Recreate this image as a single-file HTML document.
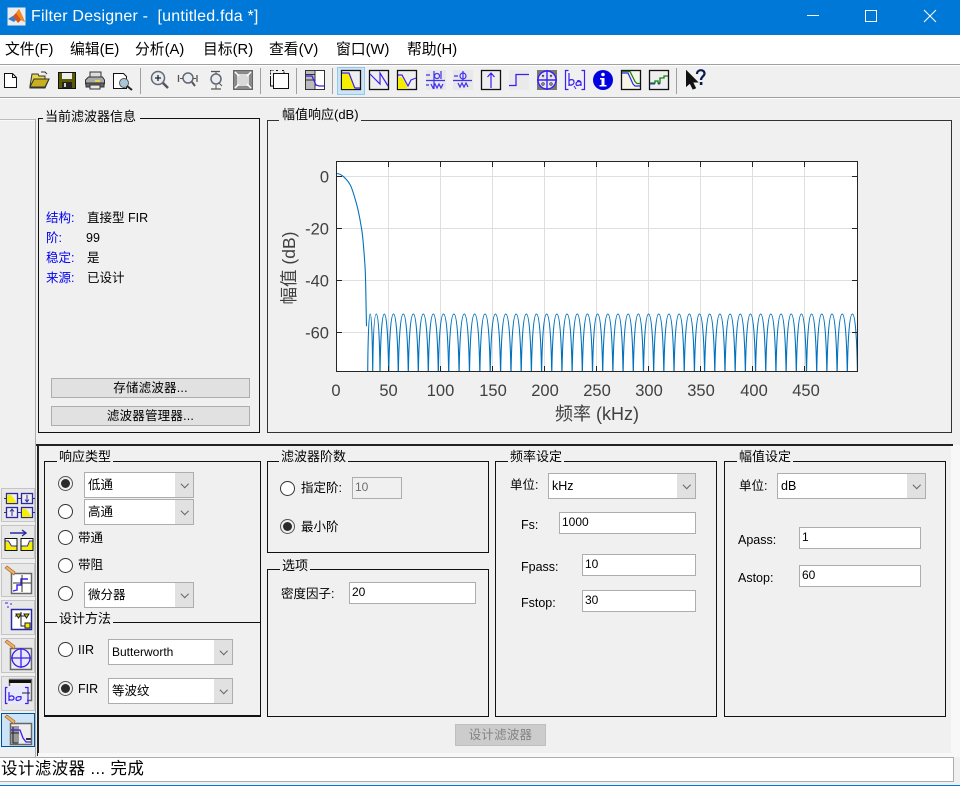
<!DOCTYPE html>
<html lang="zh"><head><meta charset="utf-8"><title>Filter Designer</title>
<style>
html,body{margin:0;padding:0}
body{width:960px;height:786px;position:relative;overflow:hidden;background:#f0f0f0;font-family:"Liberation Sans","Noto Sans CJK SC",sans-serif;font-size:12.5px;color:#000}
div,span,svg{position:absolute;box-sizing:border-box}
.t{white-space:nowrap;height:20px;line-height:20px}
.b{color:#0000f0}
.p{border:1px solid #111}
.l{height:14px;line-height:14px;background:#f0f0f0;white-space:nowrap;padding:0 2px;font-size:13px}
.s,.i{background:#fff;border:1px solid #adadad;white-space:nowrap;padding-left:3px}
.s{height:26px;line-height:24px;font-size:12.5px}
.i{height:22px;line-height:18px;font-size:12px}
.s i{position:absolute;right:0;top:0;bottom:0;width:18px;background:#e1e1e1}
.s i:after{content:"";position:absolute;left:6.500px;top:8px;width:4.500px;height:4.500px;border-right:1px solid #666;border-bottom:1px solid #666;transform:rotate(45deg)}
.r{width:15px;height:15px;border-radius:50%;background:#fff;border:1px solid #333}
.r.on{border-color:#555;background:#f0f0f0}
.r.on:after{content:"";position:absolute;left:2px;top:2px;width:9px;height:9px;border-radius:50%;background:#2b2b2b}
.btn{background:#e1e1e1;border:1px solid #adadad;text-align:center;font-size:12.5px;letter-spacing:.2px}
.m{top:40px;height:20px;line-height:20px;font-size:14.800px;white-space:nowrap}
</style></head><body>

<!-- title bar -->
<div style="left:0;top:0;width:960px;height:35px;background:#0078d7"></div>
<svg style="left:7px;top:7px" width="19" height="19" viewBox="0 0 19 19"><rect x="0.5" y="0.5" width="18" height="18" fill="#e9edf2"/><path d="M1 12l5-3 3-3 3-4 3 6 3 7-4-2-3 3-3-4z" fill="#d9531e"/><path d="M1 12l5-3 3 4-2 2z" fill="#3f7fbf"/><path d="M9 6l3-4 3 6 3 7-4-2z" fill="#f08c1a"/></svg>
<div class="t" style="left:31px;top:7px;color:#fff;font-size:16px;letter-spacing:.2px">Filter Designer -&nbsp; [untitled.fda *]</div>
<svg style="left:800px;top:5px" width="145" height="24"><path d="M7 10.5h12" stroke="#fff"/><rect x="65.5" y="5.5" width="11" height="11" fill="none" stroke="#fff"/><path d="M124 5l12 12M136 5l-12 12" stroke="#fff"/></svg>

<!-- menu -->
<div style="left:0;top:35px;width:960px;height:29px;background:#fff"></div>
<div class="m" style="left:5px">文件(F)</div>
<div class="m" style="left:70px">编辑(E)</div>
<div class="m" style="left:135px">分析(A)</div>
<div class="m" style="left:203px">目标(R)</div>
<div class="m" style="left:269px">查看(V)</div>
<div class="m" style="left:336px">窗口(W)</div>
<div class="m" style="left:407px">帮助(H)</div>
<div style="left:0;top:64px;width:960px;height:1px;background:#a0a0a0"></div>
<div style="left:0;top:65px;width:960px;height:1px;background:#fff"></div>
<div style="left:0;top:97px;width:960px;height:1px;background:#a0a0a0"></div>
<div style="left:0;top:98px;width:960px;height:1px;background:#fff"></div>

<!-- toolbar -->
<svg style="left:0;top:64px" width="720" height="34" viewBox="0 64 720 34">
<g fill="none" stroke="#a0a0a0"><path d="M140.5 68v26M260.5 68v26M296.5 68v26M332.5 68v26M676.5 68v26"/></g>
<rect x="337.5" y="67.5" width="27" height="27" fill="#cce4f7" stroke="#90c8f0"/>
<!-- new -->
<path d="M4.5 73.5h8l4 4v10h-12z" fill="#fff" stroke="#111"/><path d="M12.5 73.5v4h4" fill="none" stroke="#111"/>
<!-- open -->
<path d="M30 86l2-12h6l1 2h6v3h4l-4 9H30z" fill="#e8d44d" stroke="#333"/><path d="M30 87l4-8h15l-4 8z" fill="#c8b020" stroke="#333"/><path d="M41 72h4l2 2" fill="none" stroke="#333"/>
<!-- save -->
<rect x="58.5" y="72.5" width="17" height="16" fill="#5a5a00" stroke="#111"/><rect x="62" y="73" width="10" height="6" fill="#eee"/><rect x="62" y="82" width="10" height="6" fill="#222"/><rect x="64" y="83" width="2" height="4" fill="#ccc"/>
<!-- print -->
<rect x="90" y="72" width="11" height="6" fill="#ddd" stroke="#333"/><path d="M85.500 84v-4l3-3h14l2 3v4z" fill="#aaa" stroke="#333"/><rect x="86" y="83" width="18" height="4" fill="#666" stroke="#333"/><rect x="90" y="85" width="10" height="4" fill="#e8e8e8" stroke="#333"/><rect x="95" y="80" width="5" height="2" fill="#e8d44d"/>
<!-- preview -->
<path d="M113.500 73.500h10l3 3v12h-13z" fill="#fff" stroke="#111"/><circle cx="124" cy="83" r="4.500" fill="#a8c8d8" stroke="#555"/><path d="M127 86l5 4" stroke="#222" stroke-width="2"/>
<!-- zoom in -->
<circle cx="158" cy="78" r="6.500" fill="#e8eef0" stroke="#667"  stroke-width="1.500"/><path d="M155 78h6M158 75v6" stroke="#223" stroke-width="1.300"/><path d="M163 83l5 5" stroke="#555" stroke-width="2.500"/>
<!-- zoom x -->
<circle cx="188" cy="78" r="5" fill="#e8eef0" stroke="#667" stroke-width="1.500"/><path d="M192 82l3 4" stroke="#555" stroke-width="2"/><path d="M178.500 75v7M197 75v7" stroke="#555" stroke-width="1.300"/><path d="M180 78.500h3M193 78.500h3" stroke="#555"/>
<!-- zoom y -->
<circle cx="216" cy="79" r="5" fill="#e8eef0" stroke="#667" stroke-width="1.500"/><path d="M211 71.500h9M211 89h10" stroke="#555" stroke-width="1.300"/><path d="M216 72v2M216 85v4M219 83l3 3" stroke="#555"/>
<!-- fit -->
<rect x="233.500" y="70.500" width="19" height="19" fill="#8a8a8a" stroke="#666"/><rect x="237" y="74" width="12" height="12" fill="#d8d8d8"/><path d="M235 72l4 4M251 72l-4 4M235 88l4-4M251 88l-4-4" stroke="#fff" stroke-width="1.500"/>
<!-- copy -->
<path d="M270.500 74.500v-4h3M276 70.500h3M282 70.500h2v3" fill="none" stroke="#111" stroke-dasharray="2 1"/><rect x="273.500" y="73.500" width="15" height="15" fill="#fff" stroke="#111"/><path d="M270.500 76v10h3" fill="none" stroke="#111"/>
<!-- sidebar icon -->
<rect x="305.500" y="70.500" width="19" height="19" fill="#bbb" stroke="#333"/><rect x="315" y="71" width="9" height="18" fill="#fff"/><path d="M306 74.500h9M315 71v18M306 80h9" stroke="#333"/><path d="M306 76h6l4 9 3 1h5" fill="none" stroke="#3a20f0" stroke-width="1.300"/>
<!-- lowpass active -->
<rect x="341.500" y="70.500" width="19" height="19" fill="#eee" stroke="#111" stroke-width="1.300"/><path d="M342 73h7l6 16H342z" fill="#f5ee00"/><path d="M342 73h7l5 13 1 2h5" fill="none" stroke="#3a20f0" stroke-width="1.200"/>
<!-- highpass-like -->
<rect x="369.500" y="70.500" width="19" height="19" fill="#eee" stroke="#111" stroke-width="1.300"/><path d="M370 74l10 10v-11l8 13" fill="none" stroke="#3a20f0" stroke-width="1.200"/>
<!-- third -->
<rect x="397.500" y="70.500" width="19" height="19" fill="#eee" stroke="#111" stroke-width="1.300"/><path d="M398 77h4l5 9v3h-9z" fill="#f5ee00"/><path d="M398 75h4l6 11 3-6 5-2" fill="none" stroke="#3a20f0" stroke-width="1.200"/>
<!-- group delay -->
<rect x="426" y="70" width="20" height="20" fill="#e8e8e8"/>
<g fill="none" stroke="#4030f0" stroke-width="1.200"><path d="M426 80.500h19M426 75h4M426 85h3"/><path d="M434 71v18M441 71v8"/><circle cx="437" cy="76" r="2.500"/><path d="M431 84l2 4 2-4 2 4 2-4 2 4 2-4"/></g>
<!-- phase delay -->
<rect x="453" y="70" width="20" height="20" fill="#e8e8e8"/>
<g fill="none" stroke="#4030f0" stroke-width="1.200"><path d="M453 80.500h19M454 76h4"/><path d="M463 71v9"/><circle cx="463" cy="76" r="3"/><path d="M458 83l2 4 2-4 2 4 2-4 2 4"/></g>
<!-- impulse -->
<rect x="481.500" y="70.500" width="19" height="19" fill="#eee" stroke="#111" stroke-width="1.300"/><path d="M491 88V73M487.500 77l3.500-4 3.500 4" fill="none" stroke="#3a20f0" stroke-width="1.200"/>
<!-- step -->
<rect x="509" y="70" width="20" height="20" fill="#eaeaea"/><path d="M509 85.500h7v-11h13" fill="none" stroke="#3a20f0" stroke-width="1.300"/>
<!-- pole zero -->
<rect x="537" y="70" width="20" height="20" fill="#777"/><circle cx="547" cy="80" r="9" fill="#e8e8f8" stroke="#3a20f0" stroke-width="1.400"/><path d="M537 80h20M547 70v20" stroke="#3a20f0" stroke-width="1.400"/><path d="M542 75l2 2M544 75l-2 2M550 75l2 2M552 75l-2 2" stroke="#444"/><circle cx="543" cy="84" r="1.200" fill="none" stroke="#444"/><circle cx="551" cy="84" r="1.200" fill="none" stroke="#444"/>
<!-- coefficients -->
<path d="M568.500 70.500h-3v19h3M581.500 70.500h3v19h-3" fill="none" stroke="#3a20f0" stroke-width="1.200"/><path d="M569 73v13M569 81c1-2 5-2 5 1s-4 4-5 2M577 81c2-1 4 0 4 2v3M581 82c-3-1-5 0-5 2s3 2 5 0" fill="none" stroke="#3a20f0" stroke-width="1.200"/><path d="M574 86l2 3" stroke="#3a20f0"/>
<!-- info -->
<circle cx="603" cy="80" r="10" fill="#0000e0"/><circle cx="603" cy="74.500" r="1.800" fill="#fff"/><path d="M600 78h4.500v7h2v1.500h-7V85h2v-5.500h-1.500z" fill="#fff"/>
<!-- mag + phase -->
<rect x="621.500" y="70.500" width="19" height="19" fill="#f5f5e8" stroke="#111" stroke-width="1.300"/><path d="M622 73h6l5 11 2 2h5" fill="none" stroke="#3a20f0" stroke-width="1.200"/><path d="M622 71.500h8l5 10 2 2h3" fill="none" stroke="#108010" stroke-width="1.200"/>
<!-- round-off -->
<rect x="649.500" y="70.500" width="19" height="19" fill="#eee" stroke="#111" stroke-width="1.300"/><path d="M650 83h5v-2h3v2h2v-5h4v-2h4" fill="none" stroke="#108010" stroke-width="1.300"/><path d="M650 84h5M658 84h2" stroke="#3a20f0"/>
<!-- help -->
<path d="M686.500 71v15l3.500-3 3 6 2.500-1-3-6h5z" fill="#111" stroke="#111"/><path d="M697 74c0-5 7.500-5 7.500-.5 0 3-3.500 3-3.500 6.500" fill="none" stroke="#0a1a50" stroke-width="2.200"/><rect x="699.800" y="82" width="2.600" height="3" fill="#0a1a50"/>
</svg>

<!-- left strip -->
<div style="left:0;top:119px;width:36px;height:1px;background:#bdbdbd"></div>
<div style="left:0;top:120px;width:35px;height:1px;background:#fafafa"></div>
<div style="left:35px;top:119px;width:1px;height:638px;background:#adadad"></div>
<div style="left:37px;top:445px;width:1.500px;height:311px;background:#222"></div>
<svg style="left:0;top:486px" width="36" height="264" viewBox="0 486 36 264">
<g fill="#e8e8e8" stroke="#c4c4c4"><rect x="1.500" y="488.500" width="33" height="33"/><rect x="1.500" y="525.500" width="33" height="33"/><rect x="1.500" y="563.500" width="33" height="33"/><rect x="1.500" y="600.500" width="33" height="34"/><rect x="1.500" y="638.500" width="33" height="34"/><rect x="1.500" y="676.500" width="33" height="34"/></g>
<rect x="1.500" y="713.500" width="33" height="33" fill="#cce4f7" stroke="#005499"/>
<!-- 1 -->
<g fill="#eee" stroke="#2a2aa0" stroke-width="1.300"><rect x="6.500" y="493.500" width="11" height="10"/><rect x="21.500" y="493.500" width="11" height="10"/><rect x="6.500" y="507.500" width="11" height="10"/><rect x="21.500" y="507.500" width="11" height="10"/></g>
<path d="M7 495h4l6 8H7zM22 509h4l6 8H22z" fill="#f5ee00"/><path d="M4 498.500h2M18 498.500h3M33 498.500h2M4 512.500h2M18 512.500h3M33 512.500h2M27 495v7M25 499.500l2 2.500 2-2.500M12 516v-7M10 511.500l2-2.500 2 2.500" fill="none" stroke="#2a2aa0"/>
<!-- 2 -->
<path d="M10 533h16M22 530l4 3-4 3" fill="none" stroke="#2a2aa0" stroke-width="1.400"/><g stroke="#111" fill="#fff"><rect x="5" y="538.500" width="12" height="12"/><rect x="21" y="538.500" width="12" height="12"/></g><path d="M5.500 542l3 0 3 5 5-1v4h-11zM21.500 546l6 1 2-5h3v8h-11z" fill="#f5ee00"/><path d="M5.500 541h3l3 5h5M21.500 546h6l2-5h3" fill="none" stroke="#2a2aa0"/>
<!-- 3 -->
<rect x="11.500" y="573.500" width="20" height="20" fill="#fff" stroke="#666" stroke-width="1.500"/><path d="M13 591l4-1 0-5h4v-6h7" fill="none" stroke="#3a20f0" stroke-width="1.400"/><path d="M13 583h18M22 575v17" stroke="#333"/><path d="M5 568l2-2 8 6-1 3z" fill="#e8b860" stroke="#b06040" stroke-width=".7"/>
<!-- 4 -->
<rect x="11.500" y="609.500" width="20" height="20" fill="#fff" stroke="#2a2aa0" stroke-width="1.500"/><path d="M5 603h3M7 607h2M10 604h2" stroke="#3a20f0"/><path d="M15 616h12M21 612v14h6" fill="none" stroke="#222"/><path d="M16 614h5l-2.500 4zM24 614h5l-2.500 4z" fill="#d0c800" stroke="#222"/><rect x="25" y="623" width="5" height="5" fill="#f5ee00" stroke="#222"/>
<!-- 5 -->
<rect x="10.500" y="648.500" width="21" height="21" fill="#eee" stroke="#666" stroke-width="1.500"/><circle cx="21" cy="658" r="9" fill="#e8e8f8" stroke="#3a20f0" stroke-width="1.300"/><path d="M11 658h20M21 648v20" stroke="#3a20f0" stroke-width="1.300"/><path d="M5 642l2-2 8 6-1 3z" fill="#e8b860" stroke="#b06040" stroke-width=".7"/>
<!-- 6 -->
<rect x="9.500" y="679.500" width="22" height="21" fill="#eee" stroke="#666" stroke-width="1.500"/><rect x="9" y="680" width="22" height="3" fill="#111"/><rect x="7" y="686" width="20" height="18" fill="#e8e8ff"/><path d="M7.500 687.500h-2v16h2M25 687.500h3v16h-3M9 692v9M9 697c2-2 5-1 5 1s-3 3-5 1M21 697c-3-1-5 0-5 2s3 2 5 0v-3" fill="none" stroke="#3a20f0" stroke-width="1.200"/><path d="M22 693h8" stroke="#222"/>
<!-- 7 -->
<rect x="10.500" y="723.500" width="21" height="21" fill="#eee" stroke="#666" stroke-width="1.500"/><rect x="11" y="726" width="8" height="18" fill="#999"/><path d="M13 727v16h5M11 733h8" fill="none" stroke="#222"/><path d="M11 730h9l3 8 3 4h5" fill="none" stroke="#3a20f0" stroke-width="1.300"/><path d="M26 739h5" stroke="#333" stroke-width="2"/><path d="M5 717l2-2 8 6-1 3z" fill="#e8b860" stroke="#b06040" stroke-width=".7"/>
</svg>

<!-- filter info panel -->
<div class="p" style="left:38px;top:118px;width:222px;height:315px"></div>
<div class="l" style="left:43px;top:110px;padding-right:4px">当前滤波器信息</div>
<div class="t b" style="left:46px;top:208px">结构:</div><div class="t" style="left:87px;top:208px">直接型 FIR</div>
<div class="t b" style="left:46px;top:228px">阶:</div><div class="t" style="left:86px;top:228px">99</div>
<div class="t b" style="left:46px;top:248px">稳定:</div><div class="t" style="left:87px;top:248px">是</div>
<div class="t b" style="left:46px;top:268px">来源:</div><div class="t" style="left:87px;top:268px">已设计</div>
<div class="btn" style="left:51px;top:378px;width:199px;height:20px;line-height:19px">存储滤波器...</div>
<div class="btn" style="left:51px;top:406px;width:199px;height:20px;line-height:19px">滤波器管理器...</div>

<!-- magnitude panel -->
<div class="p" style="left:267px;top:120px;width:685px;height:313px;border-color:#333"></div>
<div class="l" style="left:279px;top:108px;padding-left:3px">幅值响应(dB)</div>

<svg style="left:268px;top:121px" width="683" height="311" viewBox="268 121 683 311">
<defs><clipPath id="c"><rect x="336" y="161" width="521.500" height="210"/></clipPath></defs>
<rect x="336.500" y="161.500" width="521" height="210" fill="#fff"/>
<g stroke="#dfdfdf" fill="none"><path d="M388.500 162v209M440.500 162v209M492.500 162v209M544.500 162v209M596.500 162v209M648.500 162v209M700.500 162v209M752.500 162v209M804.500 162v209M337 176.500h520M337 228.500h520M337 280.500h520M337 332.500h520"/></g>
<g clip-path="url(#c)" fill="none" stroke="#0072bd" stroke-width="1.100">
<path d="M336 173.500c2 0 5 1 7 2.700s5 5 7 8.300 4.500 12 6.700 20 3.500 16 5 25 2.500 25 3.300 36.700.8 30 1.500 60"/>
<path d="M367.700 376c.2-35 1-62 2.500-62s2.300 27 2.500 62c.3-35 1.300-62 3.600-62s3.400 27 3.700 62c.4-35 1.800-62 4.300-62s4 27 4.400 62c.5-35 2-62 4.800-62s4.300 27 4.800 62"/>
<path d="M398.300 376c.5-35 2-62 5-62s4.500 27 5 62c.5-35 2-62 5-62s4.500 27 5 62c.5-35 2-62 5-62s4.500 27 5 62c.5-35 2-62 5-62s4.500 27 5 62c.5-35 2-62 5.200-62s4.700 27 5.200 62"/>
<path d="M448.700 376c.5-35 2-62 5.190-62s4.690 27 5.190 62c.5-35 2-62 5.190-62s4.690 27 5.190 62c.5-35 2-62 5.190-62s4.690 27 5.190 62c.5-35 2-62 5.190-62s4.690 27 5.190 62c.5-35 2-62 5.190-62s4.690 27 5.190 62c.5-35 2-62 5.190-62s4.690 27 5.190 62"/>
<path d="M511 376c.5-35 2-62 5.095-62s4.595 27 5.095 62c.5-35 2-62 5.095-62s4.595 27 5.095 62c.5-35 2-62 5.095-62s4.595 27 5.095 62c.5-35 2-62 5.095-62s4.595 27 5.095 62c.5-35 2-62 5.095-62s4.595 27 5.095 62c.5-35 2-62 5.095-62s4.595 27 5.095 62c.5-35 2-62 5.095-62s4.595 27 5.095 62c.5-35 2-62 5.095-62s4.595 27 5.095 62c.5-35 2-62 5.095-62s4.595 27 5.095 62c.5-35 2-62 5.095-62s4.595 27 5.095 62c.5-35 2-62 5.095-62s4.595 27 5.095 62c.5-35 2-62 5.095-62s4.595 27 5.095 62c.5-35 2-62 5.095-62s4.595 27 5.095 62c.5-35 2-62 5.095-62s4.595 27 5.095 62c.5-35 2-62 5.095-62s4.595 27 5.095 62c.5-35 2-62 5.095-62s4.595 27 5.095 62c.5-35 2-62 5.095-62s4.595 27 5.095 62c.5-35 2-62 5.095-62s4.595 27 5.095 62c.5-35 2-62 5.095-62s4.595 27 5.095 62c.5-35 2-62 5.095-62s4.595 27 5.095 62c.5-35 2-62 5.095-62s4.595 27 5.095 62c.5-35 2-62 5.095-62s4.595 27 5.095 62c.5-35 2-62 5.095-62s4.595 27 5.095 62c.5-35 2-62 5.095-62s4.595 27 5.095 62c.5-35 2-62 5.095-62s4.595 27 5.095 62c.5-35 2-62 5.095-62s4.595 27 5.095 62c.5-35 2-62 5.095-62s4.595 27 5.095 62c.5-35 2-62 5.095-62s4.595 27 5.095 62c.5-35 2-62 5.095-62s4.595 27 5.095 62c.5-35 2-62 5.095-62s4.595 27 5.095 62c.5-35 2-62 5.095-62s4.595 27 5.095 62c.5-35 2-62 5.095-62s4.595 27 5.095 62"/>
<path d="M837.110 376c.5-35 2-62 5.095-62s4.595 27 5.095 62c.5-35 2-62 5.095-62s4.595 27 5.095 62"/>
</g>
<rect x="336.500" y="161.500" width="521" height="210" fill="none" stroke="#262626"/>
<g stroke="#262626"><path d="M388.500 371v-5M440.500 371v-5M492.500 371v-5M544.500 371v-5M596.500 371v-5M648.500 371v-5M700.500 371v-5M752.500 371v-5M804.500 371v-5M388.500 162v5M440.500 162v5M492.500 162v5M544.500 162v5M596.500 162v5M648.500 162v5M700.500 162v5M752.500 162v5M804.500 162v5M337 176.500h5M337 228.500h5M337 280.500h5M337 332.500h5M857 176.500h-5M857 228.500h-5M857 280.500h-5M857 332.500h-5"/></g>
<g font-family="Liberation Sans,sans-serif" font-size="16.500" fill="#404040">
<g text-anchor="end"><text x="329" y="182.500">0</text><text x="329" y="234.500">-20</text><text x="329" y="286.500">-40</text><text x="329" y="338.500">-60</text></g>
<g text-anchor="middle"><text x="336" y="396">0</text><text x="388.500" y="396">50</text><text x="440.500" y="396">100</text><text x="493" y="396">150</text><text x="545" y="396">200</text><text x="597" y="396">250</text><text x="649" y="396">300</text><text x="701" y="396">350</text><text x="754" y="396">400</text><text x="806" y="396">450</text></g>
</g>
<text x="597" y="420" text-anchor="middle" font-family="Liberation Sans,Noto Sans CJK SC,sans-serif" font-size="18" fill="#404040">频率 (kHz)</text>
<text transform="translate(295,268) rotate(-90)" text-anchor="middle" font-family="Liberation Sans,Noto Sans CJK SC,sans-serif" font-size="17.500" fill="#404040">幅值 (dB)</text>
</svg>

<!-- lower panel -->
<div style="left:951px;top:445px;width:9px;height:312px;background:#f8f8f8"></div>
<div style="left:38px;top:753px;width:922px;height:4px;background:#f8f8f8"></div>
<div style="left:36px;top:444px;width:917px;height:2px;background:#222"></div>

<div class="p" style="left:44px;top:461px;width:217px;height:256px;border-bottom-width:2px"></div>
<div style="left:44px;top:622px;width:217px;height:1px;background:#111"></div>
<div class="l" style="left:57px;top:450px">响应类型</div>
<div class="l" style="left:57px;top:612px">设计方法</div>

<div class="r on" style="left:58px;top:476px"></div><div class="s" style="left:84px;top:472px;width:110px">低通<i></i></div>
<div class="r" style="left:58px;top:504px"></div><div class="s" style="left:84px;top:499px;width:110px">高通<i></i></div>
<div class="r" style="left:58px;top:530px"></div><div class="t" style="left:78px;top:528px">带通</div>
<div class="r" style="left:58px;top:558px"></div><div class="t" style="left:78px;top:555px">带阻</div>
<div class="r" style="left:58px;top:586px"></div><div class="s" style="left:84px;top:582px;width:110px">微分器<i></i></div>
<div class="r" style="left:58px;top:642px"></div><div class="t" style="left:78px;top:640px">IIR</div><div class="s" style="left:108px;top:639px;width:125px;font-size:12px">Butterworth<i></i></div>
<div class="r on" style="left:58px;top:681px"></div><div class="t" style="left:78px;top:679px">FIR</div><div class="s" style="left:108px;top:678px;width:125px">等波纹<i></i></div>

<div class="p" style="left:267px;top:461px;width:222px;height:92px"></div>
<div class="l" style="left:279px;top:450px">滤波器阶数</div>
<div class="r" style="left:280px;top:481px"></div><div class="t" style="left:301px;top:478px">指定阶:</div>
<div class="i" style="left:352px;top:477px;width:50px;background:#f0f0f0;color:#6d6d6d;padding-left:2px">10</div>
<div class="r on" style="left:280px;top:519px"></div><div class="t" style="left:301px;top:517px">最小阶</div>

<div class="p" style="left:267px;top:569px;width:222px;height:148px"></div>
<div class="l" style="left:280px;top:559px">选项</div>
<div class="t" style="left:281px;top:584px">密度因子:</div>
<div class="i" style="left:349px;top:582px;width:127px;padding-left:2px">20</div>

<div class="p" style="left:495px;top:461px;width:222px;height:256px"></div>
<div class="l" style="left:508px;top:450px">频率设定</div>
<div class="t" style="left:510px;top:475px">单位:</div>
<div class="s" style="left:548px;top:473px;width:148px">kHz<i></i></div>
<div class="t" style="left:521px;top:515px">Fs:</div>
<div class="i" style="left:559px;top:512px;width:137px;padding-left:2px">1000</div>
<div class="t" style="left:521px;top:557px">Fpass:</div>
<div class="i" style="left:582px;top:554px;width:114px;padding-left:2px">10</div>
<div class="t" style="left:521px;top:593px">Fstop:</div>
<div class="i" style="left:582px;top:590px;width:114px;padding-left:2px">30</div>

<div class="p" style="left:724px;top:461px;width:222px;height:256px"></div>
<div class="l" style="left:737px;top:450px">幅值设定</div>
<div class="t" style="left:739px;top:476px">单位:</div>
<div class="s" style="left:777px;top:473px;width:149px">dB<i></i></div>
<div class="t" style="left:738px;top:530px">Apass:</div>
<div class="i" style="left:799px;top:527px;width:122px;padding-left:2px">1</div>
<div class="t" style="left:738px;top:568px">Astop:</div>
<div class="i" style="left:799px;top:565px;width:122px;padding-left:2px">60</div>

<div class="btn" style="left:455px;top:724px;width:91px;height:22px;line-height:21px;background:#cccccc;border-color:#bfbfbf;color:#838383">设计滤波器</div>

<!-- status -->
<div style="left:0;top:757px;width:954px;height:25px;background:#fff;border:1px solid #adadad;border-left:0"></div>
<div class="t" style="left:1px;top:759px;font-size:16.500px;letter-spacing:.4px">设计滤波器 ... 完成</div>
<div style="left:0;top:785px;width:960px;height:1px;background:#0078d7"></div>

</body></html>
